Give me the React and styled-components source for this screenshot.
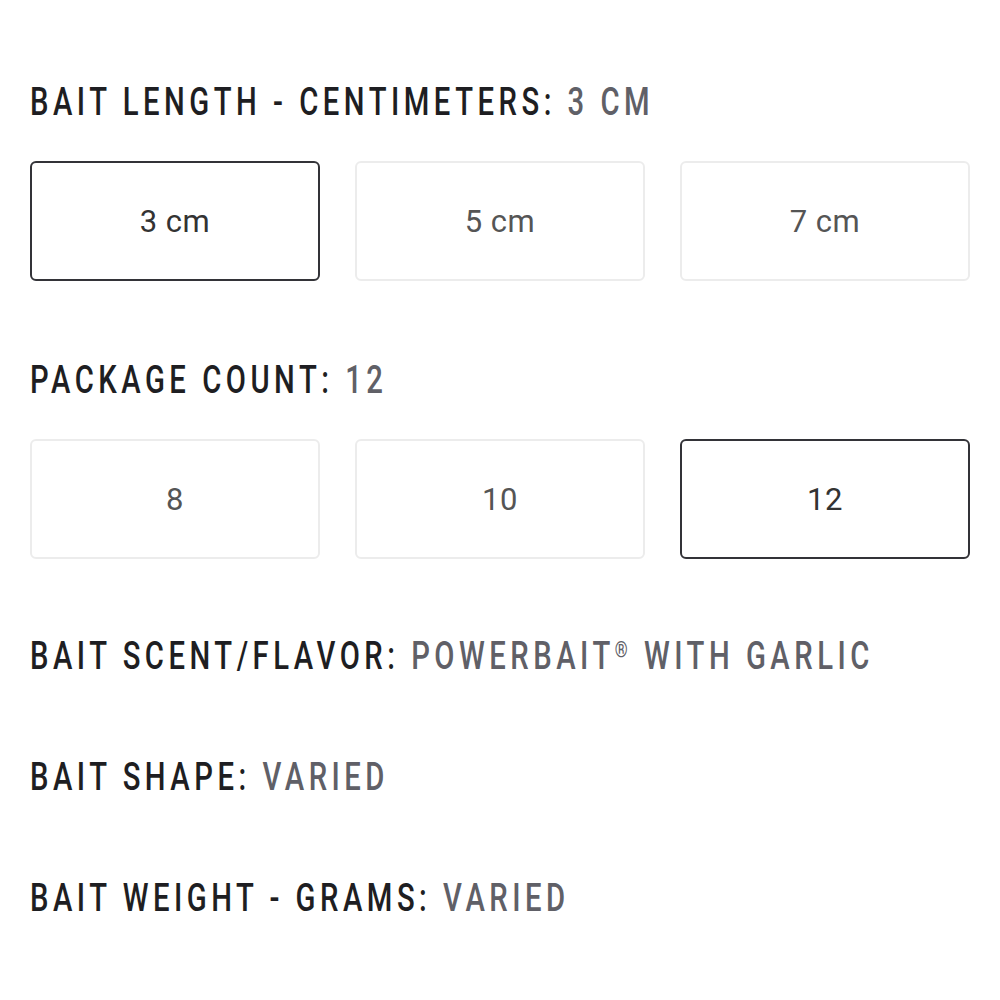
import React, { useState } from "react";
import styled, { createGlobalStyle } from "styled-components";

const GlobalStyle = createGlobalStyle`
  body {
    margin: 0;
    background: #ffffff;
  }
`;

const Page = styled.div`
  width: 1000px;
  padding: 82px 30px 0;
  box-sizing: border-box;
`;

const Section = styled.div`
  display: flex;
  flex-direction: column;
  align-items: flex-start;
  margin-bottom: ${(p) => p.gap}px;
`;

// the original uses a condensed display face, so squeeze Roboto sideways
const Label = styled.div`
  display: inline-block;
  font-family: Roboto, "Liberation Sans", sans-serif;
  font-size: 39px;
  line-height: 40px;
  height: 40px;
  letter-spacing: 6px;
  font-weight: 500;
  color: #1e1e22;
  text-transform: uppercase;
  white-space: nowrap;
  transform: scaleX(0.75);
  transform-origin: left center;
`;

const Value = styled.span`
  font-weight: 500;
  color: #606067;
`;

const Reg = styled.span`
  display: inline-block;
  font-size: 22px;
  line-height: 0;
  transform: translateY(-12px);
  letter-spacing: 6px;
`;

const Options = styled.div`
  align-self: stretch;
  display: grid;
  grid-template-columns: repeat(3, 1fr);
  column-gap: 35px;
  margin-top: 39px;
`;

const Option = styled.button`
  height: 120px;
  box-sizing: border-box;
  background: #ffffff;
  border: ${(p) => (p.selected ? "2px solid #333338" : "2px solid #ececec")};
  border-radius: 6px;
  font-family: Roboto, "Liberation Sans", sans-serif;
  font-size: 31px;
  letter-spacing: 0.5px;
  color: ${(p) => (p.selected ? "#333333" : "#555555")};
  cursor: pointer;
  padding: 0;
`;

const OptionGroup = ({ label, options, initial, gap }) => {
  const [selected, setSelected] = useState(initial);
  const current = options.find((o) => o.value === selected);
  return (
    <Section gap={gap}>
      <Label>
        {label}: <Value>{current.title}</Value>
      </Label>
      <Options>
        {options.map((o) => (
          <Option
            key={o.value}
            selected={o.value === selected}
            onClick={() => setSelected(o.value)}
          >
            {o.text}
          </Option>
        ))}
      </Options>
    </Section>
  );
};

const App = () => {
  return (
    <>
      <GlobalStyle />
      <Page>
        <OptionGroup
          label="Bait Length - Centimeters"
          gap={79}
          initial="3"
          options={[
            { value: "3", text: "3 cm", title: "3 cm" },
            { value: "5", text: "5 cm", title: "5 cm" },
            { value: "7", text: "7 cm", title: "7 cm" },
          ]}
        />
        <OptionGroup
          label="Package Count"
          gap={77}
          initial="12"
          options={[
            { value: "8", text: "8", title: "8" },
            { value: "10", text: "10", title: "10" },
            { value: "12", text: "12", title: "12" },
          ]}
        />
        <Section gap={81}>
          <Label>
            Bait Scent/Flavor: <Value>PowerBait<Reg>®</Reg> With Garlic</Value>
          </Label>
        </Section>
        <Section gap={81}>
          <Label>
            Bait Shape: <Value>Varied</Value>
          </Label>
        </Section>
        <Section gap={0}>
          <Label>
            Bait Weight - Grams: <Value>Varied</Value>
          </Label>
        </Section>
      </Page>
    </>
  );
};

export default App;
